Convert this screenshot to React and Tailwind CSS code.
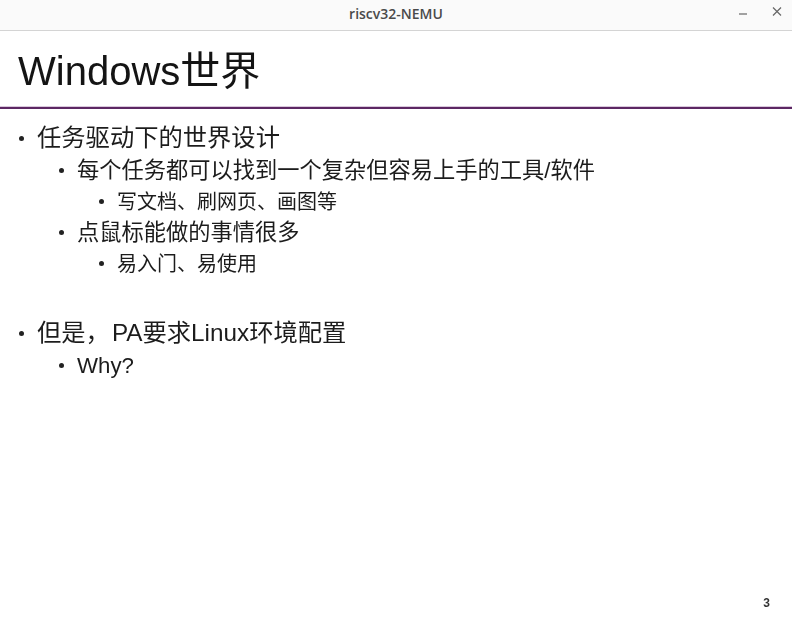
const cjk = "font-['Liberation_Sans','Noto_Sans_CJK_SC',sans-serif]";

function Item({ level, children }) {
  const styles = {
    1: "pl-[19px] text-[24.3px] h-[33px] gap-[13px]",
    2: "pl-[59px] text-[22.25px] h-[31px] gap-[13px]",
    3: "pl-[99px] text-[20px] h-[31px] gap-[13px]",
  };
  return (
    <div className={`flex items-center text-[#1c1c1c] ${styles[level]}`}>
      <span className="w-[5px] h-[5px] rounded-full bg-[#222222] shrink-0" />
      <span className="whitespace-nowrap">{children}</span>
    </div>
  );
}

export default function App() {
  return (
    <div className={`w-[792px] h-[622px] bg-white flex flex-col overflow-hidden ${cjk}`}>
      <header className="h-[31px] shrink-0 bg-[#fafafa] border-b border-[#d4d4d4] flex items-center justify-center relative">
        <span className="font-['Open_Sans',sans-serif] font-semibold text-[14px] leading-[26px] mb-[2px] text-[#4a4a4a]">riscv32-NEMU</span>
        <div className="absolute right-[10px] top-[4px] flex items-center gap-[24px]">
          <svg width="10" height="16" viewBox="0 0 10 16"><path d="M1 10h8" stroke="#666" strokeWidth="1.2" /></svg>
          <svg width="10" height="16" viewBox="0 0 10 16"><path d="M1 3.5l8 8M9 3.5l-8 8" stroke="#666" strokeWidth="1.2" /></svg>
        </div>
      </header>
      <main className="flex-1 flex flex-col relative">
        <h1 className="h-[75px] shrink-0 pl-[18px] pt-[15px] text-[40px] leading-[50px] text-[#141414] whitespace-nowrap [filter:blur(0.7px)]">Windows世界</h1>
        <div className="h-[2px] shrink-0 bg-[#5c2763] shadow-[0_-1px_0_#d9c8dc] mt-[1px]" />
        <div className="pt-[13px] flex flex-col [filter:blur(0.7px)]">
          <Item level={1}>任务驱动下的世界设计</Item>
          <Item level={2}>每个任务都可以找到一个复杂但容易上手的工具/软件</Item>
          <Item level={3}>写文档、刷网页、画图等</Item>
          <Item level={2}>点鼠标能做的事情很多</Item>
          <Item level={3}>易入门、易使用</Item>
          <div className="h-[38px]" />
          <Item level={1}>但是，<span className="ml-[2px]">PA要求Linux环境配置</span></Item>
          <Item level={2}>Why?</Item>
        </div>
        <span className="absolute right-[22px] bottom-[10px] text-[12px] font-bold text-[#333333] [filter:blur(0.7px)]">3</span>
      </main>
    </div>
  );
}
